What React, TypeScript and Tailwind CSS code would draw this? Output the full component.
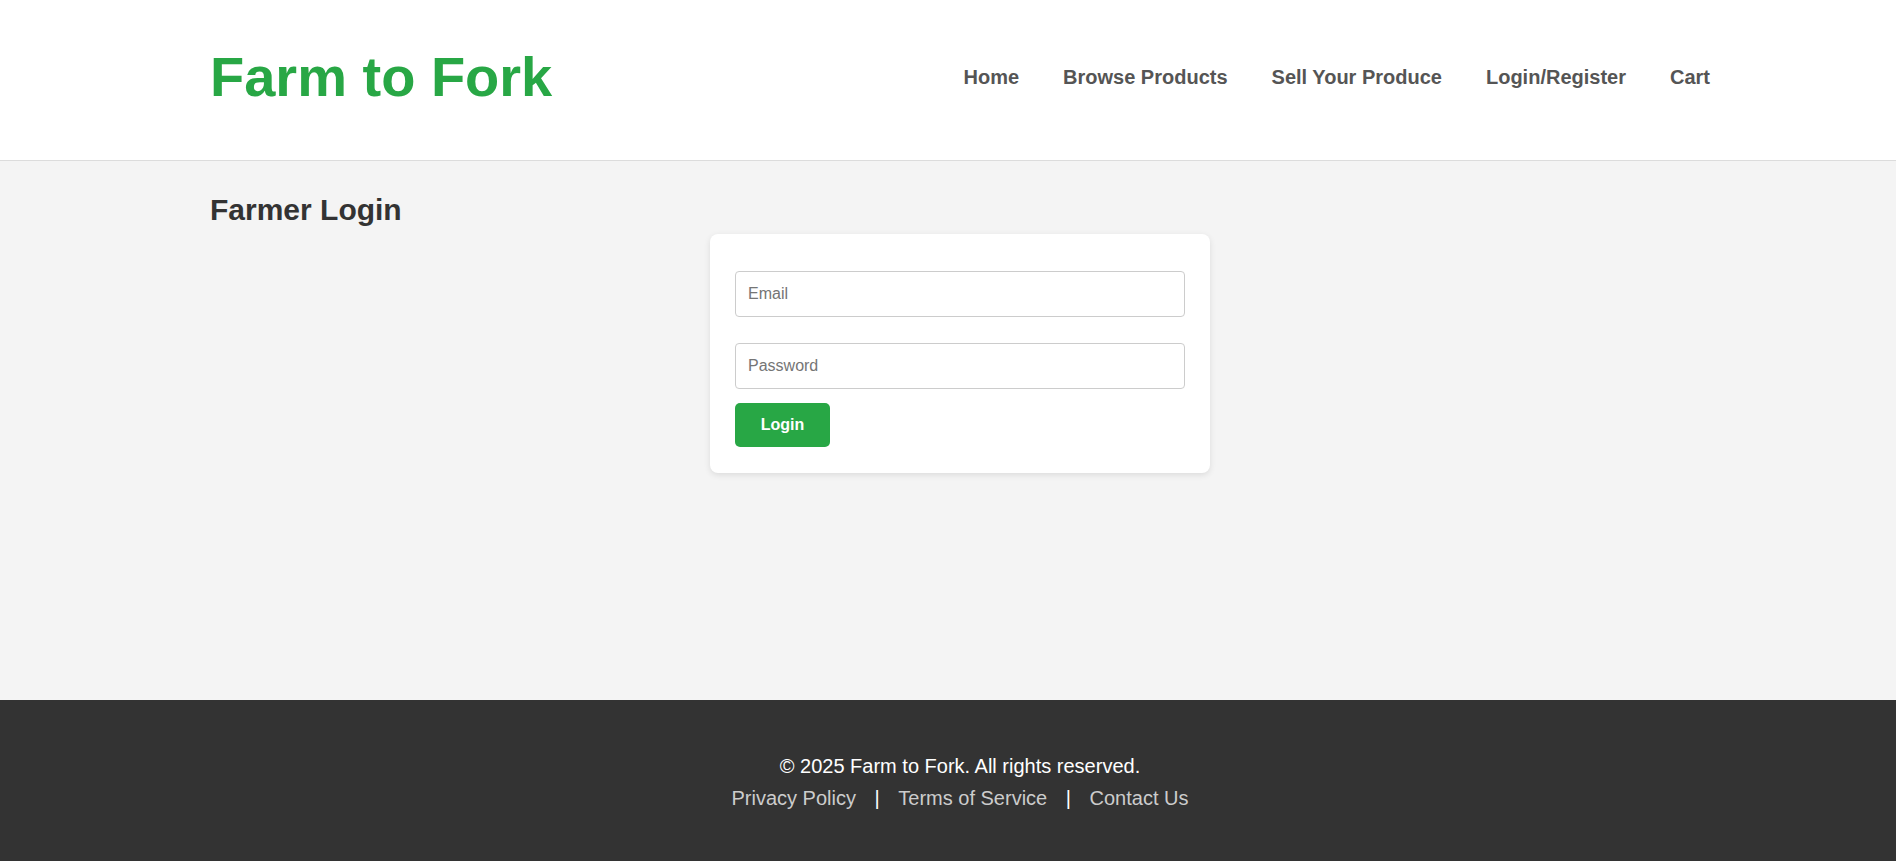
import React from 'react';

const NAV_LINKS = ['Home', 'Browse Products', 'Sell Your Produce', 'Login/Register', 'Cart'];

const App: React.FC = () => {
  return (
    <div className="w-full overflow-hidden font-['Liberation_Sans',Arial,sans-serif]">
      <div className="flex min-h-screen w-[1920px] flex-col bg-[#f4f4f4] text-[#333]">
        <header className="border-b border-[#dcdcdc] bg-white pt-[45px] pb-[51px]">
          <div className="mx-auto flex w-[1500px] items-center justify-between">
            <h1 className="text-[56px] font-bold leading-[64px] text-[#28a745]">Farm to Fork</h1>
            <nav className="flex items-center gap-[44px]">
              {NAV_LINKS.map((link) => (
                <a key={link} href="#" className="text-[20px] font-bold text-[#555]">
                  {link}
                </a>
              ))}
            </nav>
          </div>
        </header>

        <main className="flex-1 pt-[32px]">
          <div className="mx-auto w-[1500px]">
            <h2 className="text-[30px] font-bold leading-[34px] text-[#333]">Farmer Login</h2>
            <div className="mx-auto mt-[7px] w-[500px] rounded-lg bg-white px-[25px] pt-[37px] pb-[26px] shadow-[0_2px_6px_rgba(0,0,0,0.1)]">
              <input
                type="email"
                placeholder="Email"
                className="block h-[46px] w-full rounded border border-[#ccc] px-[12px] text-[16px] text-[#333] placeholder:text-[#757575] outline-none"
              />
              <input
                type="password"
                placeholder="Password"
                className="mt-[26px] block h-[46px] w-full rounded border border-[#ccc] px-[12px] text-[16px] text-[#333] placeholder:text-[#757575] outline-none"
              />
              <button className="mt-[14px] h-[44px] w-[95px] rounded-[5px] bg-[#28a745] text-[16px] font-bold text-white">
                Login
              </button>
            </div>
          </div>
        </main>

        <footer className="bg-[#333] pt-[50px] pb-[47px] text-center text-[20px] leading-[32px] text-white">
          <p>© 2025 Farm to Fork. All rights reserved.</p>
          <p>
            <a href="#" className="mx-[13px] text-[#ccc]">Privacy Policy</a>{' | '}
            <a href="#" className="mx-[13px] text-[#ccc]">Terms of Service</a>{' | '}
            <a href="#" className="mx-[13px] text-[#ccc]">Contact Us</a>
          </p>
        </footer>
      </div>
    </div>
  );
};

export default App;
